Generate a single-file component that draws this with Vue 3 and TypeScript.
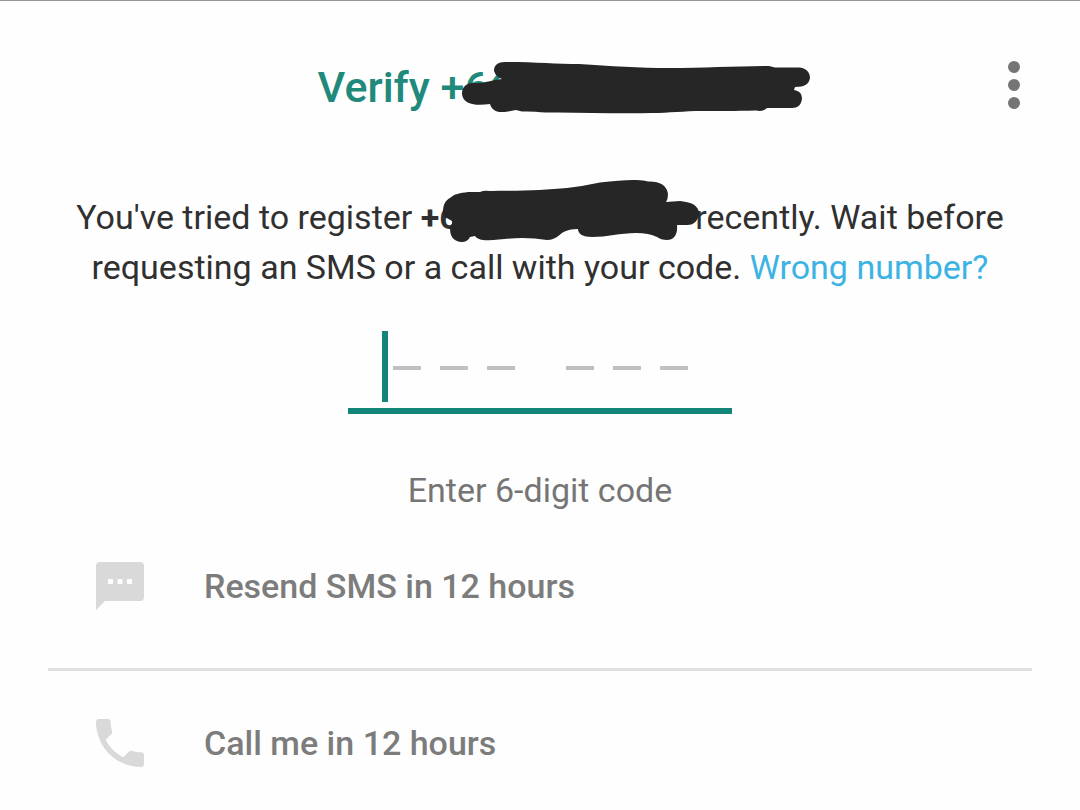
<script setup lang="ts">
import { ref } from 'vue'

interface CodeOption {
  id: string
  label: string
  viewBox: string
  icon: string
}

const code = ref('')

const options: CodeOption[] = [
  {
    id: 'sms',
    label: 'Resend SMS in 12 hours',
    viewBox: '0 0 48 48',
    icon: 'M4 0H44Q48 0 48 4V35Q48 39 44 39H9L0 48V4Q0 0 4 0ZM12 17V22H17V17ZM21.500 17V22H26.500V17ZM31 17V22H36V17Z',
  },
  {
    id: 'call',
    label: 'Call me in 12 hours',
    viewBox: '3 3 18 18',
    icon: 'M6.620 10.790c1.440 2.830 3.760 5.140 6.590 6.590l2.200-2.200c.27-.27.67-.36 1.020-.24 1.120.37 2.330.57 3.570.57.55 0 1 .45 1 1V20c0 .55-.45 1-1 1-9.390 0-17-7.610-17-17 0-.55.45-1 1-1h3.500c.55 0 1 .45 1 1 0 1.250.2 2.450.57 3.570.11.35.03.74-.25 1.020l-2.200 2.200z',
  },
]
</script>

<template>
  <main class="page">
    <header class="bar">
      <h1 class="title">
        Verify +<span class="number number-title">66<svg class="scribble scribble-title" width="350" height="54" viewBox="462 61 350 54" aria-hidden="true">
          <path d="M463 94C463 87 467 83 474 83C484 84 492 80 503 79Q497 77 495 71C495 65 499 62 506 62C535 62 558 64 580 64C612 66 640 68 670 68C705 68 740 66 770 66L776 67.500H800C807 68 811 72 811 78C810 84 806 87 796 87L795 90C801 91 803 94 803 99C802 105 799 108 793 108H768Q764 112 757 110.500C735 111 720 111 703 111C685 111 670 113 653 113C615 114 580 112 547 112.500Q532 111 523 111.500L517 110Q508 112 500 112C495 111 492 108 491 104C478 106 464 105 463 94Z" />
        </svg></span>
      </h1>
      <button class="menu" type="button" aria-label="More options">
        <svg width="12" height="48" viewBox="0 0 12 48" aria-hidden="true">
          <circle cx="6" cy="6" r="6" />
          <circle cx="6" cy="24" r="6" />
          <circle cx="6" cy="42" r="6" />
        </svg>
      </button>
    </header>

    <p class="message">
      You've tried to register <b>+<span class="number number-message">6<svg class="scribble scribble-message" width="258" height="64" viewBox="442 179 258 64" aria-hidden="true">
        <path d="M443 212C443 204 446 200 450 198C454 194 460 193 468 192L480 192Q484 190 490 191C520 191 545 190 567 188Q584 186 600 182.500Q620 180 633 180Q643 179.500 648 181.500C659 181 667 185 668 194Q668 199 666 202L680 201Q687 202 690 203C696 205 699 209 699 214C698 220 695 225 687 225H677C678 234 674 240 667 240Q661 240 657 237Q649 233 636 233C620 233 607 237 592 237C583 237 578 234 578 229Q570 229 566 231C561 232 557 240 547 240Q535 238 522 238C507 238 495 241 483 240Q477 239 475 236L470 237C468 241 465 242 461 242C453 241 450 236 450 228L452 224V221L445 217Z" />
      </svg></span></b>recently. Wait before requesting an SMS or a call with your code. <a class="link" href="#">Wrong number?</a>
    </p>

    <div class="entry">
      <div class="field">
        <input id="code" v-model="code" class="input" type="text" inputmode="numeric" maxlength="6" autocomplete="one-time-code" />
        <div v-if="!code" class="slots" aria-hidden="true">
          <i class="caret"></i>
          <div class="group"><i v-for="n in 3" :key="n" class="dash"></i></div>
          <div class="group"><i v-for="n in 3" :key="n" class="dash"></i></div>
        </div>
      </div>
      <label class="hint" for="code">Enter 6-digit code</label>
    </div>

    <div class="options">
      <button v-for="option in options" :key="option.id" class="option" type="button" disabled>
        <svg class="icon" width="48" height="48" :viewBox="option.viewBox" aria-hidden="true">
          <path :d="option.icon" fill-rule="evenodd" />
        </svg>
        <span>{{ option.label }}</span>
      </button>
    </div>
  </main>
</template>

<style>
body {
  margin: 0;
  background: #fefefe;
}
</style>

<style scoped>
.page {
  border-top: 1px solid #969696;
  font-family: Roboto, "Liberation Sans", sans-serif;
  font-size: 34px;
  line-height: 50px;
  color: #303030;
}

.bar {
  display: grid;
  grid-template-columns: 1fr auto 1fr;
  align-items: start;
  padding: 56px 48px 0;
}

.title {
  grid-column: 2;
  margin: 0;
  font-size: 43px;
  line-height: 60px;
  font-weight: 500;
  color: #1f897b;
  white-space: nowrap;
}

.menu {
  justify-self: end;
  display: flex;
  padding: 4px 12px;
  border: 0;
  background: none;
  fill: #757575;
}

.number {
  position: relative;
  display: inline-block;
  text-align: left;
}

.number-title {
  width: 298px;
}

.number-message {
  width: 256px;
}

.scribble {
  position: absolute;
  fill: #262626;
}

.scribble-title {
  top: 4px;
  left: -3px;
}

.scribble-message {
  top: -13px;
  left: 3px;
}

.message {
  margin: 75px 0 0;
  padding: 0 48px;
  text-align: center;
}

.link {
  color: #3db3e3;
  text-decoration: none;
}

.entry {
  display: flex;
  flex-direction: column;
  align-items: center;
  margin-top: 39px;
}

.field {
  position: relative;
  width: 384px;
}

.input {
  display: block;
  box-sizing: border-box;
  width: 100%;
  height: 83px;
  padding: 0 34px;
  border: 0;
  border-bottom: 6px solid #14857a;
  outline: 0;
  background: none;
  font: inherit;
}

.slots {
  position: absolute;
  top: 0;
  left: 34px;
  display: flex;
  align-items: center;
  height: 71px;
  pointer-events: none;
}

.caret {
  width: 6px;
  height: 71px;
  margin-right: 5px;
  background: #14857a;
}

.group {
  display: flex;
  gap: 19px;
}

.group + .group {
  margin-left: 51px;
}

.dash {
  width: 28px;
  height: 4px;
  margin-top: 2px;
  background: #c0c0c0;
}

.hint {
  margin-top: 53px;
  line-height: 46px;
  color: #757575;
}

.options {
  margin: 0 48px;
}

.option {
  display: flex;
  align-items: center;
  gap: 60px;
  width: 100%;
  padding: 48px 48px 57px;
  border: 0;
  background: none;
  font: inherit;
  font-weight: 500;
  color: #7c7c7c;
  text-align: left;
}

.option + .option {
  padding: 47px 48px 16px;
  border-top: 3px solid #dfdfdf;
}

.icon {
  fill: #d9d9d9;
}
</style>
